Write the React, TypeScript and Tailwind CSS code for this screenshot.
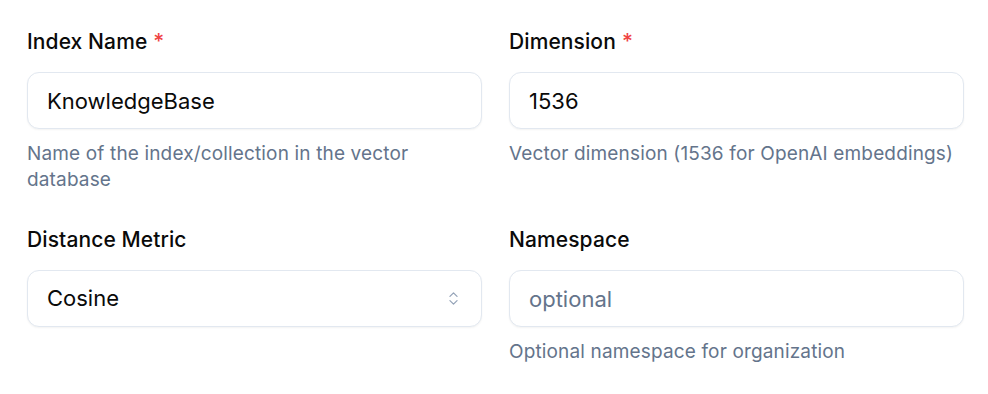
import { ChevronsUpDown } from "lucide-react";

type FieldProps = {
  label: string;
  required?: boolean;
  help?: string;
  children: React.ReactNode;
};

/**
 * ラベル付きフィールド
 */
const Field = ({ label, required, help, children }: FieldProps) => {
  return (
    <div className="flex flex-col">
      <label className="text-[21px] leading-[28px] font-medium tracking-[0.1px] text-[#0a0a0a]">
        {label}
        {required && <span className="ml-[6px] text-[#ef4444]">*</span>}
      </label>
      <div className="mt-[16px]">{children}</div>
      {help && (
        <p className="mt-[12px] text-[19px] leading-[26px] tracking-[0.15px] text-[#64748b]">
          {help}
        </p>
      )}
    </div>
  );
};

const inputClass =
  "w-full h-[57px] rounded-[12px] border border-[#e2e8f0] bg-white px-[19px] text-[22px] text-[#0a0a0a] shadow-[0_1px_2px_rgba(0,0,0,0.05)] outline-none placeholder:text-[#64748b]";

export default function App() {
  return (
    <div className="w-[988px] h-[394px] bg-white pl-[27px] pr-[24px] pt-[28px] [font-family:Inter,'Noto_Sans',sans-serif]">
      <div className="grid grid-cols-2 gap-x-[27px] gap-y-[33px]">
        <Field
          label="Index Name"
          required
          help="Name of the index/collection in the vector database"
        >
          <input className={inputClass} defaultValue="KnowledgeBase" />
        </Field>
        <Field
          label="Dimension"
          required
          help="Vector dimension (1536 for OpenAI embeddings)"
        >
          <input className={inputClass} defaultValue="1536" />
        </Field>
        <Field label="Distance Metric">
          <button className={`${inputClass} flex items-center justify-between text-left`}>
            <span>Cosine</span>
            <ChevronsUpDown className="w-[17px] h-[17px] text-[#94a3b8]" strokeWidth={1.75} />
          </button>
        </Field>
        <Field label="Namespace" help="Optional namespace for organization">
          <input className={inputClass} placeholder="optional" />
        </Field>
      </div>
    </div>
  );
}
